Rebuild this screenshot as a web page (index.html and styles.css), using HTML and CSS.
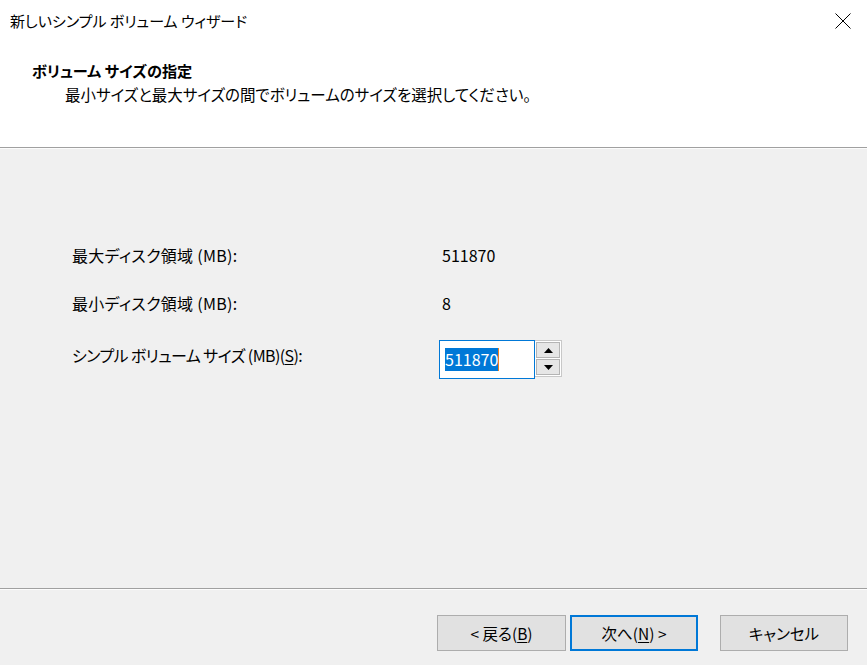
FILE: index.html
```html
<!DOCTYPE html>
<html lang="ja">
<head>
<meta charset="utf-8">
<title>新しいシンプル ボリューム ウィザード</title>
<link rel="stylesheet" href="styles.css">
</head>
<body>
<div class="window">
  <div class="top">
    <div class="titlebar">
      <span class="title">新しいシンプル ボリューム ウィザード</span>
      <svg class="close" width="16" height="16" viewBox="0 0 16 16"><path d="M0.5 0.5 L15.5 15.5 M15.5 0.5 L0.5 15.5" stroke="#000" stroke-width="1" fill="none"/></svg>
    </div>
    <div class="header">
      <div class="h-title">ボリューム サイズの指定</div>
      <div class="h-sub">最小サイズと最大サイズの間でボリュームのサイズを選択してください。</div>
    </div>
  </div>
  <div class="content">
    <div class="row r1">
      <div class="label">最大ディスク領域 (MB):</div>
      <div class="value">511870</div>
    </div>
    <div class="row r2">
      <div class="label">最小ディスク領域 (MB):</div>
      <div class="value">8</div>
    </div>
    <div class="row r3">
      <div class="label">シンプル ボリューム サイズ (MB)(<u>S</u>):</div>
      <div class="spin">
        <div class="input"><span class="sel">511870</span><span class="caret"></span></div>
        <div class="spin-btns">
          <div class="sbtn"><svg width="9" height="5" viewBox="0 0 9 5"><path d="M4.5 0 L9 5 L0 5 Z" fill="#000"/></svg></div>
          <div class="sbtn"><svg width="9" height="5" viewBox="0 0 9 5"><path d="M0 0 L9 0 L4.5 5 Z" fill="#000"/></svg></div>
        </div>
      </div>
    </div>
  </div>
  <div class="footer">
    <div class="btn">&lt;&nbsp;戻る(<u>B</u>)</div>
    <div class="btn default">次へ(<u>N</u>)&nbsp;&gt;</div>
    <div class="btn cancel">キャンセル</div>
  </div>
</div>
</body>
</html>
```
FILE: styles.css
```css
html, body {
  margin: 0;
  padding: 0;
}
body {
  font-family: "Noto Sans CJK JP", "Noto Sans", sans-serif;
  font-feature-settings: "palt";
  font-size: 15px;
  color: #000;
  background: #f0f0f0;
}
.window {
  width: 867px;
  height: 665px;
  display: flex;
  flex-direction: column;
  overflow: hidden;
}
.top {
  background: #fff;
  height: 147px;
  border-bottom: 1px solid #a0a0a0;
  box-shadow: 0 1px 0 #fcfcfc;
  display: flex;
  flex-direction: column;
}
.titlebar {
  height: 42px;
  display: flex;
  align-items: center;
  justify-content: space-between;
  padding: 0 16px 0 10px;
}
.title {
  font-size: 15px;
  line-height: 20px;
}
.close {
  display: block;
}
.header {
  padding-left: 32px;
  padding-top: 17px;
}
.h-title {
  font-weight: bold;
  font-size: 15.2px;
  line-height: 22px;
}
.h-sub {
  padding-left: 33px;
  font-size: 15.5px;
  line-height: 22px;
  margin-top: 2px;
}
.content {
  flex: 1;
  padding-left: 72px;
  padding-top: 97px;
  display: flex;
  flex-direction: column;
  font-size: 16px;
}
.row {
  display: flex;
  align-items: flex-start;
}
.label {
  width: 367px;
  line-height: 20px;
}
.r1 .label,
.r2 .label {
  letter-spacing: 0.3px;
}
.value {
  padding-left: 3px;
  line-height: 20px;
}
.r2 {
  margin-top: 28px;
}
.r3 {
  margin-top: 27px;
  align-items: center;
}
.r3 .label {
  padding-bottom: 10px;
  letter-spacing: -0.6px;
}
.spin {
  display: flex;
  align-items: flex-start;
}
.input {
  border: 1px solid #0078d7;
  background: #fff;
  display: flex;
  align-items: center;
  padding-left: 5px;
  box-sizing: border-box;
  width: 96px;
  height: 39px;
}
.sel {
  background: #0078d7;
  color: #fff;
  line-height: 23px;
  font-size: 16px;
}
.caret {
  width: 1px;
  height: 23px;
  background: #f08020;
}
.spin-btns {
  width: 27px;
  border: 1px solid #c8c8c8;
  border-left: none;
  background: #fff;
  display: flex;
  flex-direction: column;
  justify-content: space-between;
  padding: 1px;
  box-sizing: border-box;
  height: 37px;
}
.sbtn {
  height: 16px;
  background: #e6e6e6;
  border: 1px solid #b4b4b4;
  box-sizing: border-box;
  display: flex;
  align-items: center;
  justify-content: center;
}
.footer {
  height: 77px;
  border-top: 1px solid #a0a0a0;
  box-shadow: inset 0 1px 0 #fcfcfc;
  display: flex;
  align-items: flex-start;
  padding-top: 26px;
  padding-left: 437px;
  box-sizing: border-box;
  font-size: 15.5px;
}
.btn {
  width: 129px;
  height: 36px;
  background: #e1e1e1;
  border: 1px solid #adadad;
  box-sizing: border-box;
  display: flex;
  align-items: center;
  justify-content: center;
  line-height: 20px;
  white-space: pre;
}
.btn.default {
  margin-left: 4px;
  width: 128px;
  border: 2px solid #0078d7;
}
.btn.cancel {
  margin-left: 22px;
  width: 128px;
}
u {
  text-underline-offset: 2px;
}
```
